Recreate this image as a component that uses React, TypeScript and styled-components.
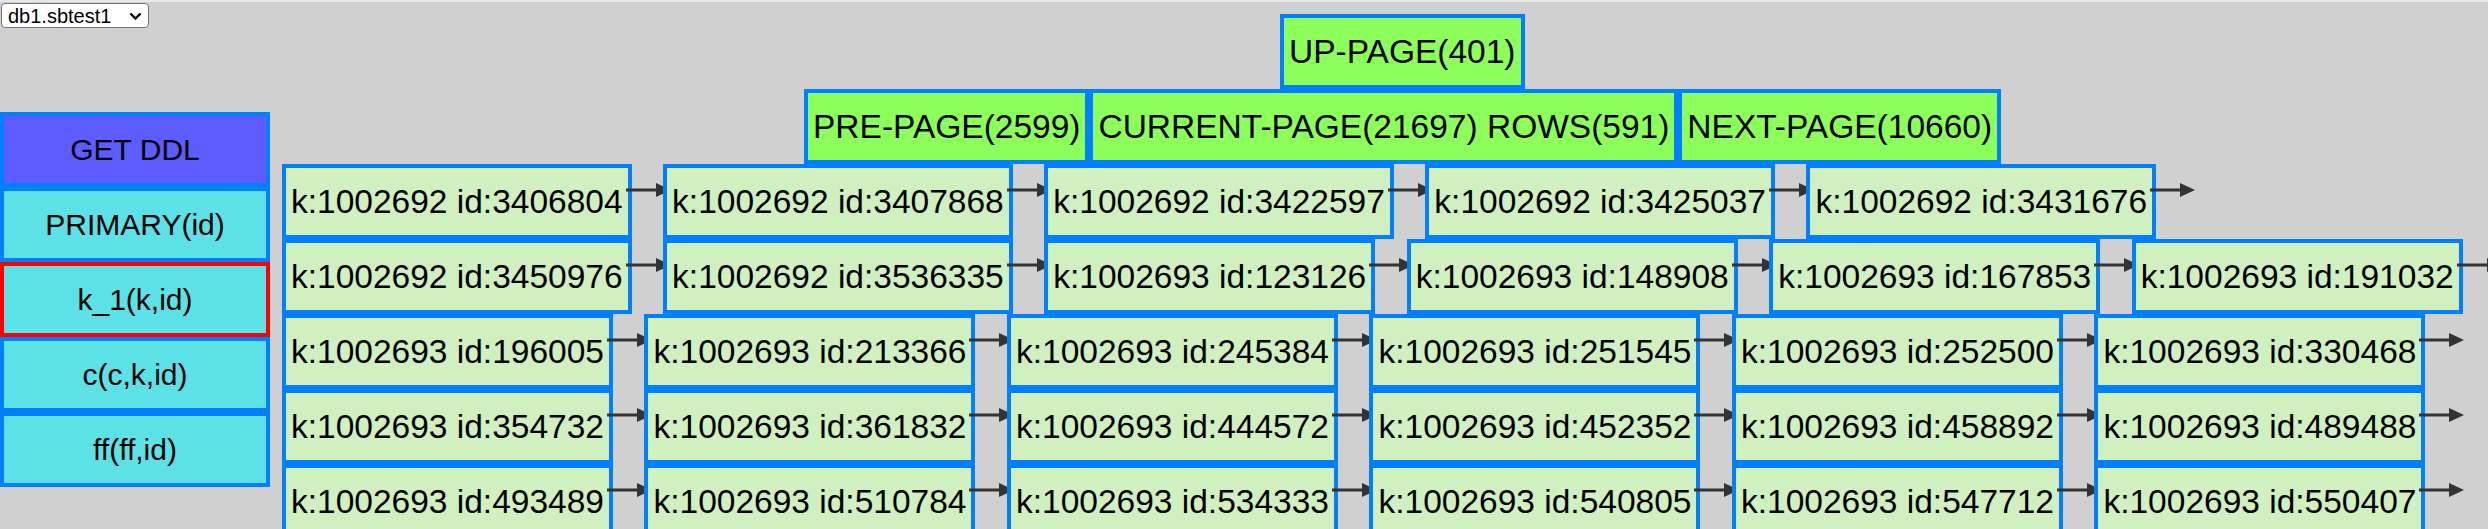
import React from 'react';
import styled, { createGlobalStyle } from 'styled-components';

const colors = {
  page: '#d0d0d0',
  edge: '#e8e8e8',
  border: '#0080ff',
  selected: '#ff0000',
  record: '#d0f0c0',
  pageNode: '#8cff5a',
  ddl: '#5c5cff',
  index: '#5ce1e6',
  arrow: '#333333',
};

const GlobalStyle = createGlobalStyle`
  html, body {
    margin: 0;
    padding: 0;
    background: ${colors.page};
  }
  body {
    border-top: 2px solid ${colors.edge};
    overflow: hidden;
    color: #000;
    font-family: "Liberation Sans", Arial, sans-serif;
  }
`;

const Layout = styled.div({
  columnGap: 12,
  display: 'grid',
  gridTemplateColumns: '270px 1fr',
  height: 527,
  overflow: 'hidden',
});

const Sidebar = styled.div({
  display: 'flex',
  flexDirection: 'column',
});

const SelectWrap = styled.div({
  margin: '1px 0 0 1px',
  position: 'relative',
  width: 148,
});

const TableSelect = styled.select({
  appearance: 'none',
  background: '#fff',
  border: '1px solid #767676',
  borderRadius: 4,
  boxSizing: 'border-box',
  color: '#000',
  display: 'block',
  fontFamily: '"Liberation Sans", Arial, sans-serif',
  fontSize: 20,
  height: 25,
  margin: 0,
  padding: '0 0 0 6px',
  width: 148,
});

const Chevron = styled.svg({
  pointerEvents: 'none',
  position: 'absolute',
  right: 7,
  top: 9,
});

const IndexList = styled.div({
  display: 'flex',
  flexDirection: 'column',
  marginTop: 84,
});

const IndexButton = styled.div<{ $bg: string; $selected?: boolean }>`
  align-items: center;
  background: ${p => p.$bg};
  border: 4px solid ${p => (p.$selected ? colors.selected : colors.border)};
  box-sizing: border-box;
  display: flex;
  font-size: 30px;
  height: 75px;
  justify-content: center;
  width: 270px;
`;

const Main = styled.div({
  display: 'flex',
  flexDirection: 'column',
  paddingTop: 12,
});

const NavTree = styled.div({
  display: 'flex',
  flexDirection: 'column',
  marginLeft: 522,
});

const NavRow = styled.div<{ $indent?: number }>`
  display: flex;
  margin-left: ${p => p.$indent || 0}px;
`;

const PageNode = styled.div`
  align-items: center;
  background: ${colors.pageNode};
  border: 4px solid ${colors.border};
  box-sizing: border-box;
  display: flex;
  flex: none;
  font-size: 33.5px;
  height: 75px;
  padding: 0 5px;
  white-space: nowrap;
`;

const RecordRow = styled.div({
  display: 'flex',
  gap: 31.5,
});

const Record = styled.div`
  align-items: center;
  background: ${colors.record};
  border: 4px solid ${colors.border};
  box-sizing: border-box;
  display: flex;
  flex: none;
  font-size: 33.5px;
  height: 75px;
  padding: 0 5px;
  position: relative;
  white-space: nowrap;
`;

const Link = styled.svg({
  left: 'calc(100% - 2px)',
  position: 'absolute',
  top: 15,
});

const NextArrow = () => (
  <Link width="45" height="14" viewBox="0 0 45 14">
    <line x1="0" y1="7" x2="31" y2="7" stroke={colors.arrow} strokeWidth="3" />
    <polygon points="30,0 45,7 30,14" fill={colors.arrow} />
  </Link>
);

const indexes = [
  { name: 'PRIMARY(id)' },
  { name: 'k_1(k,id)', selected: true },
  { name: 'c(c,k,id)' },
  { name: 'ff(ff,id)' },
];

const rows: [number, number][][] = [
  [[1002692, 3406804], [1002692, 3407868], [1002692, 3422597], [1002692, 3425037], [1002692, 3431676]],
  [[1002692, 3450976], [1002692, 3536335], [1002693, 123126], [1002693, 148908], [1002693, 167853], [1002693, 191032]],
  [[1002693, 196005], [1002693, 213366], [1002693, 245384], [1002693, 251545], [1002693, 252500], [1002693, 330468]],
  [[1002693, 354732], [1002693, 361832], [1002693, 444572], [1002693, 452352], [1002693, 458892], [1002693, 489488]],
  [[1002693, 493489], [1002693, 510784], [1002693, 534333], [1002693, 540805], [1002693, 547712], [1002693, 550407]],
];

const App = () => (
  <>
    <GlobalStyle />
    <Layout>
      <Sidebar>
        <SelectWrap>
          <TableSelect defaultValue="db1.sbtest1">
            <option value="db1.sbtest1">db1.sbtest1</option>
          </TableSelect>
          <Chevron width="13" height="8" viewBox="0 0 13 8">
            <path d="M1.5 1.5 L6.5 6.5 L11.5 1.5" fill="none" stroke="#000" strokeWidth="2.4" />
          </Chevron>
        </SelectWrap>

        <IndexList>
          <IndexButton $bg={colors.ddl}>GET DDL</IndexButton>
          {indexes.map(index => (
            <IndexButton key={index.name} $bg={colors.index} $selected={index.selected}>
              {index.name}
            </IndexButton>
          ))}
        </IndexList>
      </Sidebar>

      <Main>
        <NavTree>
          <NavRow $indent={476}>
            <PageNode>UP-PAGE(401)</PageNode>
          </NavRow>
          <NavRow>
            <PageNode>PRE-PAGE(2599)</PageNode>
            <PageNode>CURRENT-PAGE(21697) ROWS(591)</PageNode>
            <PageNode>NEXT-PAGE(10660)</PageNode>
          </NavRow>
        </NavTree>

        {rows.map((row, i) => (
          <RecordRow key={i}>
            {row.map(([k, id]) => (
              <Record key={id}>
                k:{k} id:{id}
                <NextArrow />
              </Record>
            ))}
          </RecordRow>
        ))}
      </Main>
    </Layout>
  </>
);

export default App;
